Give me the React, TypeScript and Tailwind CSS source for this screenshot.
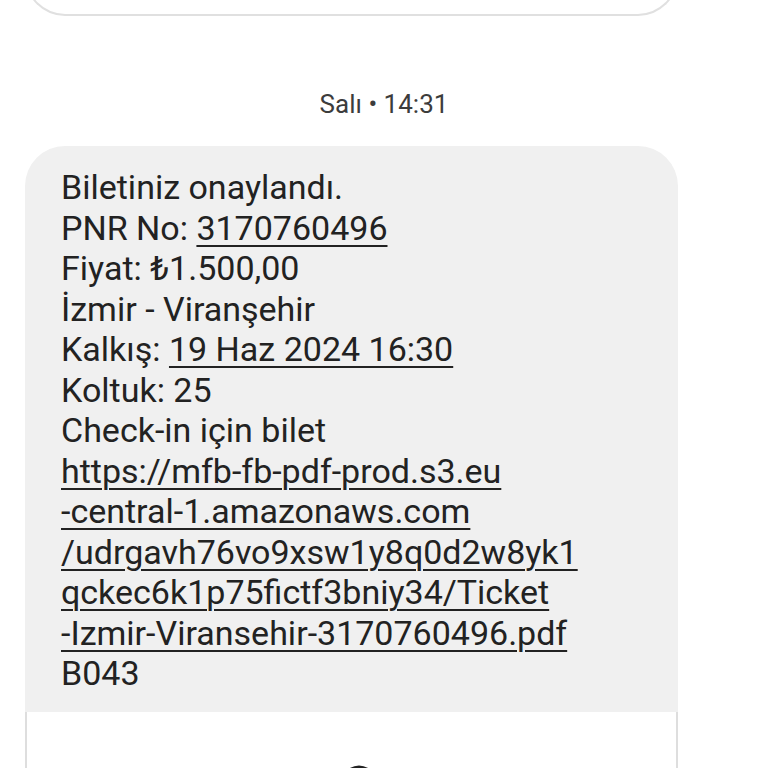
import React from "react";

const font = { fontFamily: "Roboto, 'Noto Sans', sans-serif" };

function U({ children }: { children: React.ReactNode }) {
  return (
    <span className="underline decoration-[2px] underline-offset-[5px]">{children}</span>
  );
}

export default function App() {
  const linkLines = [
    "https://mfb-fb-pdf-prod.s3.eu",
    "-central-1.amazonaws.com",
    "/udrgavh76vo9xsw1y8q0d2w8yk1",
    "qckec6k1p75fictf3bniy34/Ticket",
    "-Izmir-Viransehir-3170760496.pdf",
  ];
  return (
    <div className="w-[768px] h-[768px] overflow-hidden bg-white" style={font}>
      {/* previous bubble bottom */}
      <div className="h-[16px] overflow-hidden flex flex-col justify-end">
        <div className="ml-[25px] w-[653px] h-[60px] shrink-0 rounded-b-[40px] border-[2px] border-t-0 border-[#e0e0e0] bg-white" />
      </div>

      {/* timestamp */}
      <div className="h-[130px] flex justify-center pt-[72px]">
        <span className="text-[26px] leading-[32px] text-[#3c3c3c] h-[32px]">Salı • 14:31</span>
      </div>

      {/* message bubble */}
      <div className="ml-[25px] w-[653px]">
        <div className="bg-[#f0f0f0] rounded-t-[40px] pl-[36px] pr-[10px] pt-[21px] pb-[18px] text-[34px] leading-[40.5px] text-[#222]">
          <div>Biletiniz onaylandı.</div>
          <div>PNR No: <U>3170760496</U></div>
          <div>Fiyat: ₺1.500,00</div>
          <div>İzmir - Viranşehir</div>
          <div>Kalkış: <U>19 Haz 2024 16:30</U></div>
          <div>Koltuk: 25</div>
          <div>Check-in için bilet</div>
          {linkLines.map((l) => (
            <div key={l} className="whitespace-nowrap">
              <U>{l}</U>
            </div>
          ))}
          <div>B043</div>
        </div>
        <div className="h-[80px] border-x-[2px] border-[#dedede] bg-white flex justify-center pt-[48px]">
          <svg width="34" height="30" viewBox="0 0 34 30" className="ml-[14px]">
            <path d="M4 14 Q17 2 30 14" fill="none" stroke="#222" strokeWidth="5" strokeLinecap="round" />
          </svg>
        </div>
      </div>
    </div>
  );
}
